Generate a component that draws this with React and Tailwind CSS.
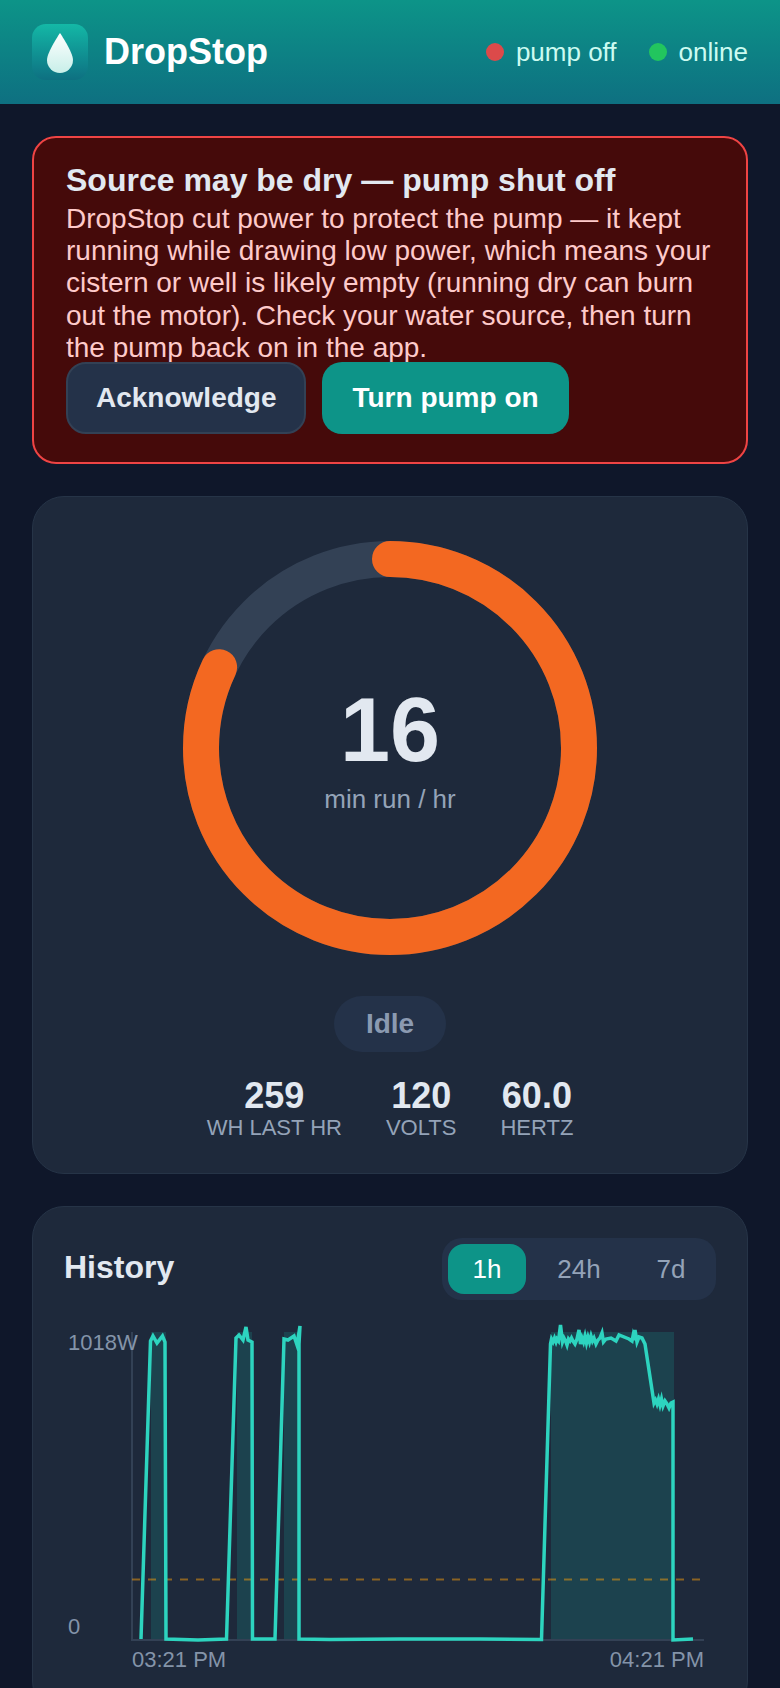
const pts = "141,1639 150.5,1341 153,1336 157,1343 162.5,1336 165,1342 166,1639 198,1640 226.5,1639 236,1338 239,1335 243,1340 246,1327 248,1340 252,1342 252.5,1639 275,1639 284,1339 288,1340 294,1336 297,1345 300,1326 299,1344 299,1639 330,1639.5 400,1639 480,1639 541.5,1639.5 550.5,1344 551.5,1339 553,1342 554.5,1338 556,1342 557,1339 558.5,1341 560.5,1325 562.5,1342 564,1338 565.5,1341 567,1345 568.5,1339 570,1341 571.5,1338 573,1341 575,1344 577,1339 579,1330 580.5,1344 582,1338 583.5,1342 585,1336 586.5,1343 588,1337 589.5,1342 591,1336 592.5,1341 594,1338 596,1344 598,1340 600,1338 602,1333 603.5,1342 606,1339 611,1338 616,1341 619,1335 629,1339 632,1341 633,1336 634,1340 635,1330 637,1342 639,1337 642,1338 645,1344 654,1403 655.5,1400 657,1404 658.5,1399 660,1405 661.5,1399 663,1406 665,1401 667,1404 669,1408 671,1403 673,1402 673,1640 693,1639".split(" ").map((p) => p.split(",")).map(([x, y]) => `${Number(x) - 64},${Number(y) - 1316}`).join(" ");

const bands = [[151, 15], [237, 15], [284, 15], [551, 123]];

function Status({ dot, label }) {
  return (
    <div className="flex items-center gap-3">
      <span className={`h-[18px] w-[18px] rounded-full ${dot}`} />
      <span className="text-[26px] leading-[32px] text-[#ccfbf1]">{label}</span>
    </div>
  );
}

function Stat({ value, label }) {
  return (
    <div className="flex flex-col items-center">
      <span className="text-[36px] leading-[39px] font-bold text-[#e2e8f0]">{value}</span>
      <span className="text-[22px] leading-[25px] uppercase text-[#94a3b8]">{label}</span>
    </div>
  );
}

export default function App() {
  const r = 189;
  const c = 2 * Math.PI * r;
  return (
    <div className="h-[1688px] overflow-hidden bg-[#0f172a] font-['Liberation_Sans',Arial,sans-serif]">
      <header className="flex h-[104px] items-center justify-between bg-gradient-to-b from-[#0d9488] to-[#0e7081] px-8">
        <div className="flex items-center gap-4">
          <div className="h-14 w-14 rounded-[14px] bg-gradient-to-b from-[#14b8a6] to-[#0e7081]">
            <svg viewBox="0 0 56 56" className="h-14 w-14">
              <defs>
                <linearGradient id="drop" x1="0" y1="0" x2="0" y2="1">
                  <stop offset="0" stopColor="#ffffff" />
                  <stop offset="1" stopColor="#c8efe9" />
                </linearGradient>
              </defs>
              <path d="M28 9C28 9 15 28 15 36a13 13 0 0 0 26 0C41 28 28 9 28 9Z" fill="url(#drop)" />
            </svg>
          </div>
          <h1 className="text-[36px] leading-[44px] font-bold text-white">DropStop</h1>
        </div>
        <div className="flex items-center gap-8">
          <Status dot="bg-[#dc4a4a]" label="pump off" />
          <Status dot="bg-[#22c55e]" label="online" />
        </div>
      </header>

      <main className="flex flex-col gap-8 px-8 pt-8">
        <section className="rounded-3xl border-2 border-[#ef4444] bg-[#450a0a] px-8 pt-6 pb-[28px]">
          <h2 className="mb-1 text-[32px] leading-[37px] font-bold text-[#e2e8f0]">Source may be dry — pump shut off</h2>
          <p className="text-[28px] leading-[32.2px] text-[#fecaca]">
            DropStop cut power to protect the pump — it kept running while drawing low power, which means your cistern or well is likely empty (running dry can burn out the motor). Check your water source, then turn the pump back on in the app.
          </p>
          <div className="-mt-[2px] flex gap-4">
            <button className="h-[72px] rounded-[20px] border-2 border-[#334155] bg-[#243249] px-[28px] text-[28px] font-bold text-[#e2e8f0]">Acknowledge</button>
            <button className="h-[72px] rounded-[20px] bg-[#0d9488] px-[30px] text-[28px] font-bold text-white">Turn pump on</button>
          </div>
        </section>

        <section className="flex flex-col items-center rounded-[32px] border border-[#263447] bg-[#1e293b] px-8 pt-[44px] pb-[33px]">
          <div className="relative h-[414px] w-[414px]">
            <svg viewBox="0 0 414 414" className="h-[414px] w-[414px] -rotate-90">
              <circle cx="207" cy="207" r={r} fill="none" stroke="#334155" strokeWidth="36" />
              <circle cx="207" cy="207" r={r} fill="none" stroke="#f36821" strokeWidth="36" strokeLinecap="round" strokeDasharray={`${c * 0.82} ${c}`} />
            </svg>
            <div className="absolute inset-0 flex flex-col items-center justify-center pt-1">
              <span className="-mt-[1px] text-[90px] leading-[90px] font-bold text-[#e2e8f0]">16</span>
              <span className="mt-[8px] text-[26px] leading-[32px] text-[#94a3b8]">min run / hr</span>
            </div>
          </div>
          <div className="mt-[41px] flex h-14 items-center rounded-full bg-[#243249] px-8 text-[28px] font-bold text-[#8b9ab1]">Idle</div>
          <div className="mt-[24px] flex gap-11">
            <Stat value="259" label="Wh last hr" />
            <Stat value="120" label="Volts" />
            <Stat value="60.0" label="Hertz" />
          </div>
        </section>

        <section className="rounded-[32px] border border-[#263447] bg-[#1e293b] px-[31px] pt-[31px] pb-8">
          <div className="flex items-start justify-between">
            <h2 className="mt-[9px] text-[32px] leading-[40px] font-bold text-[#e2e8f0]">History</h2>
            <div className="flex h-[62px] items-center rounded-[20px] bg-[#243249] p-[6px] text-[26px] text-[#94a3b8]">
              <button className="h-[50px] w-[78px] rounded-2xl bg-[#0d9488] text-white">1h</button>
              <button className="h-[50px] w-[106px]">24h</button>
              <button className="h-[50px] w-[78px]">7d</button>
            </div>
          </div>
          <svg viewBox="0 0 652 364" className="mt-[16px] block h-[364px] w-[652px]">
            {bands.map(([x, w]) => (
              <rect key={x} x={x - 64} y="16" width={w} height="308" fill="#14b8a6" fillOpacity="0.18" />
            ))}
            <path d="M68 16V324H640" fill="none" stroke="#334155" strokeWidth="2" />
            <path d="M68 263.5H636" fill="none" stroke="#f59e0b" strokeOpacity="0.5" strokeWidth="2" strokeDasharray="8 8" />
            <polyline points={pts} fill="none" stroke="#2dd4bf" strokeWidth="3.5" strokeLinejoin="miter" strokeMiterlimit="5" />
            <g fill="#8494a9" fontSize="22" fontFamily="Liberation Sans">
              <text x="4" y="34">1018W</text>
              <text x="4" y="318">0</text>
              <text x="68" y="351">03:21 PM</text>
              <text x="640" y="351" textAnchor="end">04:21 PM</text>
            </g>
          </svg>
        </section>
      </main>
    </div>
  );
}
